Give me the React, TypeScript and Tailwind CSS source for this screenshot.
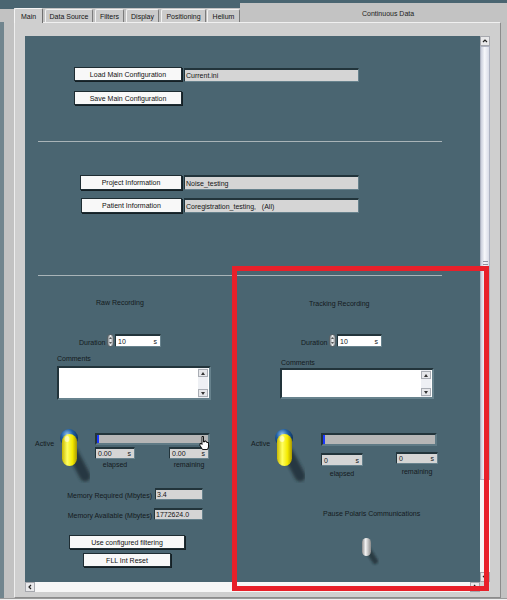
import React from "react";

type P = { className?: string; children?: React.ReactNode };

const Btn = ({ className = "", children }: P) => (
  <div
    className={`flex items-center justify-center bg-[#f8f8f8] border border-[#1e2c32] shadow-[1px_1px_0_#152025] text-[7px] leading-none text-[#111111] ${className}`}
  >
    {children}
  </div>
);

const StrField = ({ className = "", children }: P) => (
  <div
    className={`flex items-center bg-[#d5d5d5] border-t-2 border-l border-b border-r border-t-[#22343b] border-l-[#22343b] border-b-[#67828d] border-r-[#67828d] pl-[1px] text-[7px] leading-none text-[#151515] whitespace-pre ${className}`}
  >
    {children}
  </div>
);

const NumField = ({
  className = "",
  value,
  unit,
  white,
}: {
  className?: string;
  value: string;
  unit: string;
  white?: boolean;
}) => (
  <div
    className={`flex items-center justify-between border-t-2 border-l border-b border-r border-t-[#22343b] border-l-[#22343b] border-b-[#67828d] border-r-[#67828d] px-[2px] text-[7px] leading-none text-[#151515] ${
      white ? "bg-white" : "bg-[#d5d5d5]"
    } ${className}`}
  >
    <span>{value}</span>
    <span className="pr-[1px]">{unit}</span>
  </div>
);

const Label = ({ className = "", children }: P) => (
  <div className={`text-[7px] leading-[9px] text-[#141a1d] whitespace-nowrap ${className}`}>{children}</div>
);

const Spinner = () => (
  <div className="w-[7px] h-[13px] rounded-full border border-[#5a6266] bg-[linear-gradient(to_right,#8a9094,#eceeef,#959a9e)] flex flex-col items-center justify-between py-[2px]">
    <svg width="3" height="2" viewBox="0 0 3 2">
      <path d="M0 2 L1.5 0 L3 2Z" fill="#555" />
    </svg>
    <svg width="3" height="2" viewBox="0 0 3 2">
      <path d="M0 0 L1.5 2 L3 0Z" fill="#555" />
    </svg>
  </div>
);

const Chevron = ({ dir }: { dir: "up" | "down" | "left" | "right" }) => {
  const d =
    dir === "up"
      ? "M1 4 L3 2 L5 4"
      : dir === "down"
      ? "M1 2 L3 4 L5 2"
      : dir === "left"
      ? "M4 1 L2 3 L4 5"
      : "M2 1 L4 3 L2 5";
  return (
    <svg width="6" height="6" viewBox="0 0 6 6">
      <path d={d} fill="none" stroke="#222" strokeWidth="1.2" />
    </svg>
  );
};

const CommentBox = ({ className = "" }: P) => (
  <div
    className={`flex bg-white border-2 border-t-[#22343b] border-l-[#22343b] border-b-[#67828d] border-r-[#67828d] ${className}`}
  >
    <div className="flex-1" />
    <div className="w-[10px] mr-[1px] flex flex-col justify-between bg-[#eef0f4] py-[1px]">
      <div className="h-[8px] flex items-center justify-center bg-[#e6e7ea] border border-[#a9adb4]">
        <svg width="4" height="3" viewBox="0 0 4 3">
          <path d="M0 3 L2 0 L4 3Z" fill="#333" />
        </svg>
      </div>
      <div className="h-[8px] flex items-center justify-center bg-[#e6e7ea] border border-[#a9adb4]">
        <svg width="4" height="3" viewBox="0 0 4 3">
          <path d="M0 0 L2 3 L4 0Z" fill="#333" />
        </svg>
      </div>
    </div>
  </div>
);

const Progress = ({ className = "" }: P) => (
  <div
    className={`flex bg-[#b6b6b6] border-2 border-t-[#22343b] border-l-[#22343b] border-b-[#5f7a85] border-r-[#5f7a85] ${className}`}
  >
    <div className="w-[2px] h-full bg-[#1a38ff]" />
  </div>
);

const YellowToggle = ({ id }: { id: string }) => (
  <svg width="32" height="54" viewBox="0 0 32 54" className="shrink-0">
    <defs>
      <radialGradient id={`ball${id}`} cx="40%" cy="30%" r="70%">
        <stop offset="0" stopColor="#8fc0ee" />
        <stop offset="0.45" stopColor="#2160a5" />
        <stop offset="1" stopColor="#0b2648" />
      </radialGradient>
      <linearGradient id={`lev${id}`} x1="0" x2="1" y1="0" y2="0">
        <stop offset="0" stopColor="#c9b800" />
        <stop offset="0.35" stopColor="#ffff62" />
        <stop offset="0.7" stopColor="#f4ea00" />
        <stop offset="1" stopColor="#a99800" />
      </linearGradient>
      <filter id={`sh${id}`} x="-50%" y="-50%" width="200%" height="200%">
        <feGaussianBlur stdDeviation="1.4" />
      </filter>
    </defs>
    <line
      x1="15"
      y1="24"
      x2="27"
      y2="47"
      stroke="#1c2a30"
      strokeOpacity="0.75"
      strokeWidth="11"
      strokeLinecap="round"
      filter={`url(#sh${id})`}
    />
    <circle cx="11" cy="9" r="9" fill={`url(#ball${id})`} />
    <rect x="4" y="5" width="15" height="32" rx="7.5" fill={`url(#lev${id})`} />
    <ellipse cx="9" cy="10" rx="2.5" ry="3" fill="#ffffff" opacity="0.55" />
  </svg>
);

const GrayToggle = () => (
  <svg width="20" height="30" viewBox="0 0 20 30" className="shrink-0">
    <defs>
      <linearGradient id="gtl" x1="0" x2="1" y1="0" y2="0">
        <stop offset="0" stopColor="#8c8c8c" />
        <stop offset="0.4" stopColor="#f4f4f4" />
        <stop offset="1" stopColor="#8a8a8a" />
      </linearGradient>
      <filter id="gts" x="-50%" y="-50%" width="200%" height="200%">
        <feGaussianBlur stdDeviation="1.1" />
      </filter>
    </defs>
    <line x1="9" y1="14" x2="16" y2="25" stroke="#1c2a30" strokeOpacity="0.7" strokeWidth="6" strokeLinecap="round" filter="url(#gts)" />
    <rect x="3" y="2" width="9" height="18" rx="4.5" fill="url(#gtl)" />
  </svg>
);

const Tab = ({ className = "", children }: P) => (
  <div
    className={`flex items-center justify-center h-[13px] bg-[#cbcbcb] border-t border-l border-t-[#f2f2f2] border-l-[#f2f2f2] border-r border-r-[#7b7b7b] rounded-t-[2px] text-[7px] leading-none text-[#141414] ${className}`}
  >
    {children}
  </div>
);

export default function App() {
  return (
    <div className="relative w-[507px] h-[600px] bg-[#4a6571] flex flex-col overflow-hidden font-['Liberation_Sans',Arial,sans-serif] select-none">
      {/* Tab header */}
      <div className="h-[22px] flex shrink-0">
        <div className="w-[14px] self-end h-[13px] bg-[#c2c2c2]" />
        <div className="self-end flex items-end h-[14px] bg-[#c2c2c2]">
          <div className="relative z-10 -mb-px flex items-center justify-center w-[29px] h-[15px] bg-[#cfcfcf] border-t border-l border-t-[#f4f4f4] border-l-[#f4f4f4] border-r border-r-[#6f6f6f] rounded-t-[2px] text-[7px] leading-none text-[#141414]">
            Main
          </div>
          <Tab className="ml-[2px] w-[48px]">Data Source</Tab>
          <Tab className="ml-[2px] w-[29px]">Filters</Tab>
          <Tab className="ml-[2px] w-[33px]">Display</Tab>
          <Tab className="ml-[2px] w-[45px]">Positioning</Tab>
          <Tab className="ml-[1px] w-[33px]">Helium</Tab>
        </div>
        <div className="flex-1 mt-[3px] bg-[#c3c3c3] pl-[122px] pt-[6px]">
          <Label className="text-[#222]">Continuous Data</Label>
        </div>
      </div>

      {/* Tab body */}
      <div className="flex-1 flex">
        <div className="w-[4px] bg-[#71858e]" />
        <div className="w-[10px] bg-[#c2c2c2]" />
        <div className="w-[487px] bg-[#cfcfcf] border-t border-l border-t-[#f0f0f0] border-l-[#eeeeee] border-r border-r-[#8c8c8c] border-b border-b-[#8c8c8c] pt-[13px] pl-[10px] pr-[10px] pb-[5px] flex flex-col">
          <div className="flex">
            {/* Canvas */}
            <div className="relative w-[455px] h-[546px] bg-[#4a6571] flex flex-col overflow-hidden">
              {/* Load / Save */}
              <div className="flex mt-[31px]">
                <Btn className="ml-[49px] w-[108px] h-[14px]">Load Main Configuration</Btn>
                <StrField className="ml-[2px] mt-[1px] w-[175px] h-[14px]">Current.ini</StrField>
              </div>
              <Btn className="ml-[49px] mt-[9px] w-[108px] h-[14px]">Save Main Configuration</Btn>
              <div className="ml-[13px] mt-[36px] w-[404px] h-px bg-[#a9b4b8]" />

              {/* Project / Patient */}
              <div className="flex mt-[33px]">
                <Btn className="ml-[55px] w-[102px] h-[15px]">Project Information</Btn>
                <StrField className="ml-[2px] w-[175px] h-[15px]">Noise_testing</StrField>
              </div>
              <div className="flex mt-[8px]">
                <Btn className="ml-[56px] w-[101px] h-[15px]">Patient Information</Btn>
                <StrField className="ml-[2px] w-[175px] h-[15px]">{"Coregistration_testing,   (All)"}</StrField>
              </div>
              <div className="ml-[13px] mt-[62px] w-[404px] h-px bg-[#a9b4b8]" />

              {/* Two columns */}
              <div className="flex">
                {/* Raw Recording */}
                <div className="w-[207px] flex flex-col">
                  <Label className="ml-[71px] mt-[22px]">Raw Recording</Label>
                  <div className="flex items-end mt-[27px] ml-[54px] h-[13px]">
                    <Label className="w-[28px]">Duration</Label>
                    <Spinner />
                    <NumField white className="ml-[1px] w-[46px] h-[13px]" value="10" unit="s" />
                  </div>
                  <Label className="ml-[32px] mt-[7px]">Comments</Label>
                  <CommentBox className="ml-[32px] mt-[3px] w-[154px] h-[34px]" />
                  <div className="flex items-start mt-[29px] h-[54px]">
                    <Label className="ml-[10px] mt-[10px] w-[21px]">Active</Label>
                    <div className="ml-[2px]">
                      <YellowToggle id="a" />
                    </div>
                    <div className="ml-[5px] flex flex-col">
                      <Progress className="mt-[4px] w-[115px] h-[12px]" />
                      <div className="flex mt-[2px]">
                        <div className="w-[40px] flex flex-col items-center">
                          <NumField className="w-[40px] h-[12px]" value="0.00" unit="s" />
                          <Label className="mt-[1px]">elapsed</Label>
                        </div>
                        <div className="ml-[34px] w-[40px] flex flex-col items-center">
                          <NumField className="w-[40px] h-[12px]" value="0.00" unit="s" />
                          <Label className="mt-[1px]">remaining</Label>
                        </div>
                      </div>
                    </div>
                  </div>
                  <div className="flex items-end mt-[5px]">
                    <Label className="w-[127px] text-right">Memory Required (Mbytes)</Label>
                    <StrField className="ml-[3px] w-[48px] h-[12px]">3.4</StrField>
                  </div>
                  <div className="flex items-end mt-[8px]">
                    <Label className="w-[127px] text-right">Memory Available (Mbytes)</Label>
                    <StrField className="ml-[2px] w-[49px] h-[12px]">1772624.0</StrField>
                  </div>
                  <Btn className="ml-[44px] mt-[15px] w-[116px] h-[14px]">Use configured filtering</Btn>
                  <Btn className="ml-[58px] mt-[4px] w-[88px] h-[14px]">FLL Int Reset</Btn>
                </div>

                {/* Tracking Recording */}
                <div className="w-[248px] flex flex-col">
                  <Label className="ml-[77px] mt-[23px]">Tracking Recording</Label>
                  <div className="flex items-end mt-[26px] ml-[69px] h-[13px]">
                    <Label className="w-[28px]">Duration</Label>
                    <Spinner />
                    <NumField white className="ml-[1px] w-[45px] h-[13px]" value="10" unit="s" />
                  </div>
                  <Label className="ml-[49px] mt-[11px]">Comments</Label>
                  <CommentBox className="ml-[48px] mt-[1px] w-[154px] h-[31px]" />
                  <div className="flex items-start mt-[30px] h-[54px]">
                    <Label className="ml-[19px] mt-[10px] w-[21px]">Active</Label>
                    <div className="ml-[1px]">
                      <YellowToggle id="b" />
                    </div>
                    <div className="ml-[16px] flex flex-col">
                      <Progress className="mt-[4px] w-[116px] h-[13px]" />
                      <div className="flex mt-[6px]">
                        <div className="w-[42px] flex flex-col items-center">
                          <NumField className="mt-[1px] w-[42px] h-[13px]" value="0" unit="s" />
                          <Label className="mt-[3px]">elapsed</Label>
                        </div>
                        <div className="ml-[33px] w-[42px] flex flex-col items-center">
                          <NumField className="w-[42px] h-[12px]" value="0" unit="s" />
                          <Label className="mt-[3px]">remaining</Label>
                        </div>
                      </div>
                    </div>
                  </div>
                  <Label className="ml-[91px] mt-[26px]">Pause Polaris Communications</Label>
                  <div className="ml-[127px] mt-[18px]">
                    <GrayToggle />
                  </div>
                </div>
              </div>

              {/* mouse cursor */}
              <svg
                className="absolute left-[174px] top-[400px]"
                width="11"
                height="15"
                viewBox="0 0 11 15"
              >
                <path
                  d="M3 0.5 H4.5 V6 H5.5 V5 H7 V6 H8 V6.5 H9.5 V11 L8.5 13.5 H3.5 L1 9.5 V7.5 H2.5 L3 8.5 Z"
                  fill="#ffffff"
                  stroke="#000000"
                  strokeWidth="0.9"
                  strokeLinejoin="round"
                />
              </svg>
            </div>

            {/* Vertical scrollbar */}
            <div className="w-[10px] h-[546px] flex flex-col bg-[#f3f3f5]">
              <div className="h-[10px] flex items-center justify-center bg-[#e8e8ea] border border-[#a6a8ae]">
                <Chevron dir="up" />
              </div>
              <div className="h-[434px] flex items-center justify-center bg-[linear-gradient(to_right,#c9cddb,#f6f7fb_45%,#d9dce7)] border border-[#aeb3c2]">
                <div className="w-[5px] h-[4px] border-t border-b border-[#8d93a3]" />
              </div>
              <div className="flex-1 bg-[#f6f6f6]" />
              <div className="h-[10px] flex items-center justify-center bg-[#e8e8ea] border border-[#a6a8ae]">
                <Chevron dir="down" />
              </div>
            </div>
          </div>

          {/* Horizontal scrollbar */}
          <div className="flex h-[10px]">
            <div className="w-[10px] flex items-center justify-center bg-[#e8e8ea] border border-[#a6a8ae]">
              <Chevron dir="left" />
            </div>
            <div className="w-[435px] bg-[#f7f7f7]" />
            <div className="w-[10px] flex items-center justify-center bg-[#e8e8ea] border border-[#a6a8ae]">
              <Chevron dir="right" />
            </div>
            <div className="w-[10px] bg-[#d6d6d6]" />
          </div>
        </div>
        <div className="flex-1 bg-[#c2c2c2]" />
      </div>
      <div className="h-[2px] bg-[#efefef] border-t border-t-[#9a9a9a] shrink-0" />

      {/* Red annotation box */}
      <div className="absolute left-[232px] top-[266px] w-[257px] h-[325px] border-[5px] border-[#e8202a] pointer-events-none" />
    </div>
  );
}
